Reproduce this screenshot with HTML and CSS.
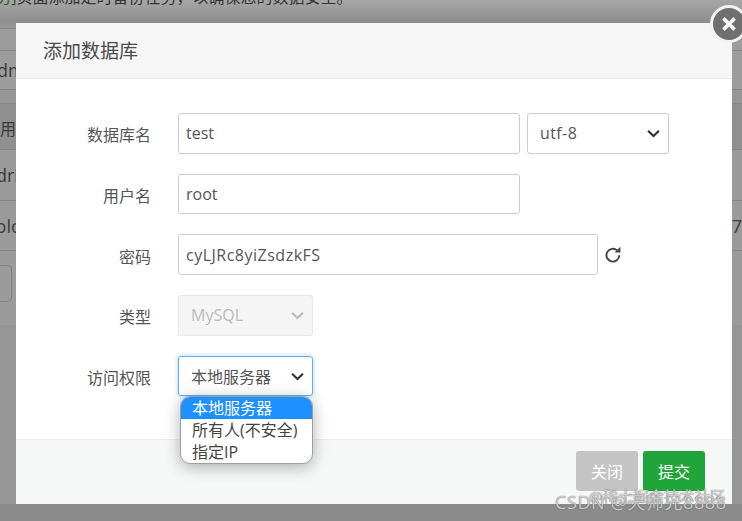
FILE: index.html
```html
<!DOCTYPE html>
<html lang="zh">
<head>
<meta charset="utf-8">
<title>添加数据库</title>
<link rel="stylesheet" href="styles.css">
</head>
<body>
<div class="page">
  <p class="notice"><span class="notice-link">[计划任务]</span>页面添加定时备份任务，以确保您的数据安全。</p>
  <div class="bg-rows">
    <div class="bg-row h22"></div>
    <div class="bg-row h39"><span>admin</span></div>
    <div class="bg-row h14"></div>
    <div class="bg-row h46"><span class="cn">用户名</span></div>
    <div class="bg-row h51"><span class="dri">drive</span></div>
    <div class="bg-row h50"><span>colo</span><span class="seven">7</span></div>
  </div>
  <div class="bg-btn"></div>
</div>

<div class="modal">
  <div class="modal-header">添加数据库</div>
  <div class="modal-body">
    <div class="field">
      <label class="label">数据库名</label>
      <div class="input w342">test</div>
      <div class="select w142 charset">utf-8<svg class="chev" viewBox="0 0 12 8"><path d="M1 1.500 6 6.300l5-4.800"/></svg></div>
    </div>
    <div class="field">
      <label class="label">用户名</label>
      <div class="input w342">root</div>
    </div>
    <div class="field">
      <label class="label">密码</label>
      <div class="input w420 password">cyLJRc8yiZsdzkFS</div>
      <svg class="refresh" viewBox="0 0 16 16"><path d="M13.600 8.200A5.700 5.700 0 1 1 11.700 3.900"/><path class="fill" d="M9.400 5.800h5.200V.6z"/></svg>
    </div>
    <div class="field">
      <label class="label">类型</label>
      <div class="select w135 disabled">MySQL<svg class="chev" viewBox="0 0 12 8"><path d="M1 1.500 6 6.300l5-4.800"/></svg></div>
    </div>
    <div class="field last">
      <label class="label">访问权限</label>
      <div class="select w135 focus">本地服务器<svg class="chev" viewBox="0 0 12 8"><path d="M1 1.500 6 6.300l5-4.800"/></svg></div>
    </div>
  </div>
  <div class="modal-footer">
    <button class="btn gray">关闭</button>
    <button class="btn green">提交</button>
  </div>
  <ul class="dropdown">
    <li class="active">本地服务器</li>
    <li>所有人(不安全)</li>
    <li>指定IP</li>
  </ul>
</div>

<div class="close"><svg viewBox="0 0 16 16"><path d="M3 3l10 10M13 3 3 13"/></svg></div>
<div class="wm wm-back">@稀土掘金技术社区</div>
<div class="wm wm-front">CSDN @天师兄8888</div>
</body>
</html>
```
FILE: styles.css
```css
* { box-sizing: border-box; }
html, body { margin: 0; height: 100%; }
body {
  width: 742px;
  height: 521px;
  overflow: hidden;
  position: relative;
  background: linear-gradient(#969696 0, #969696 504px, #8b8b8b 504px);
  font-family: "Open Sans", "Noto Sans CJK SC", sans-serif;
  color: #444;
}
.page { height: 325px; background: linear-gradient(#a6a6a6 0, #8e8e8e 22px, #9c9c9c 30px, #9a9a9a 100%); overflow: hidden; position: relative; }
.notice { margin: -12px 0 0; height: 22px; font-size: 16px; line-height: 18px; color: #333; white-space: nowrap; }
.notice-link { color: #1f5c2c; margin-left: -58px; }
.bg-rows { margin-top: 18px; }
.bg-row { border-bottom: 1px solid #858585; font-size: 18px; color: #3a3a3a; display: flex; justify-content: space-between; align-items: center; overflow: hidden; }
.bg-row:first-child { border-top: 1px solid #858585; }
.bg-row span:first-child { margin-left: -13px; }
.bg-row .cn:first-child { margin-left: 0; font-size: 16px; margin-top: 2px; }
.bg-row .dri:first-child { margin-left: -4px; }
.h22 { height: 23px; } .h39 { height: 39px; } .h14 { height: 14px; background: #969696; } .h46 { height: 46px; background: #8f8f8f; } .h51 { height: 51px; } .h50 { height: 50px; }
.bg-btn { position: absolute; left: -30px; top: 265px; width: 42px; height: 37px; border: 1px solid #808080; border-radius: 4px; }

.modal {
  position: absolute; left: 16px; top: 23px; width: 716px; height: 481px;
  background: #fff; display: flex; flex-direction: column;
  border-radius: 3px 0 0 0;
}
.modal-header { height: 56px; background: #f6f6f6; border-bottom: 1px solid #eaeaea; padding: 0 27px; font-size: 19px; line-height: 56px; color: #4a4a4a; }
.modal-body { flex: 1; padding-top: 34px; }
.field { display: flex; align-items: center; height: 40.7px; margin-bottom: 20px; }
.label { width: 135px; text-align: right; font-size: 16px; color: #555; margin-right: 27px; padding-top: 2px; }
.input, .select { height: 100%; border: 1px solid #ccc; border-radius: 3px; background: #fff; font-size: 16px; color: #555; display: flex; align-items: center; padding: 0 7px; }
.password { letter-spacing: .5px; }
.w342 { width: 342px; } .w420 { width: 420px; } .w142 { width: 142px; } .w135 { width: 135px; }
.charset { margin-left: 7px; letter-spacing: .4px; }
.select { justify-content: space-between; padding: 0 8px 0 12px; }
.chev { width: 13px; height: 9px; fill: none; stroke: #333; stroke-width: 2; flex: none; }
.refresh { width: 18px; height: 18px; margin-left: 6px; fill: none; stroke: #444; stroke-width: 1.7; }
.refresh .fill { fill: #444; stroke: none; }
.disabled { background: #f5f5f5; border-color: #e8e8e8; color: #bbb; }
.disabled .chev { stroke: #bbb; }
.focus { border-color: #66afe9; box-shadow: 0 0 5px rgba(102,175,233,.55); }
.modal-footer { height: 65px; background: #f6f8f8; border-top: 1px solid #ececec; display: flex; justify-content: flex-end; gap: 5px; padding: 11px 27px 0 0; }
.btn { width: 62px; height: 40px; border: 0; border-radius: 3px; color: #fff; font: 16px "Open Sans", "Noto Sans CJK SC", sans-serif; }
.gray { background: #c4c4c4; }
.green { background: #20a53a; }
.dropdown {
  position: absolute; left: 164px; top: 373px; width: 133px; height: 68px; margin: 0; padding: 0; list-style: none;
  background: #fff; border: 1px solid #a0a0a0; border-radius: 10px; overflow: hidden;
  font-size: 16px; line-height: 22px; color: #444;
  box-shadow: 0 3px 16px rgba(0,0,0,.3);
}
.dropdown li { height: 22px; padding-left: 11px; white-space: nowrap; }
.dropdown .active { background: #1e90ff; color: #fff; }
.close { position: absolute; left: 710px; top: 5px; width: 38px; height: 38px; border-radius: 50%; background: #6f6f6f; border: 3px solid #f2f2f2; display: flex; align-items: center; justify-content: center; }
.close svg { width: 18px; height: 18px; fill: none; stroke: #f4f4f4; stroke-width: 3.2; }
.wm { position: absolute; white-space: nowrap; color: rgba(235,235,235,.8); text-shadow: 0 0 1px #444; }
.wm-back { left: 589px; top: 486px; font-size: 15.3px; line-height: 20px; }
.wm-front { left: 555px; top: 490px; font-size: 18px; line-height: 24px; letter-spacing: .6px; }
```
